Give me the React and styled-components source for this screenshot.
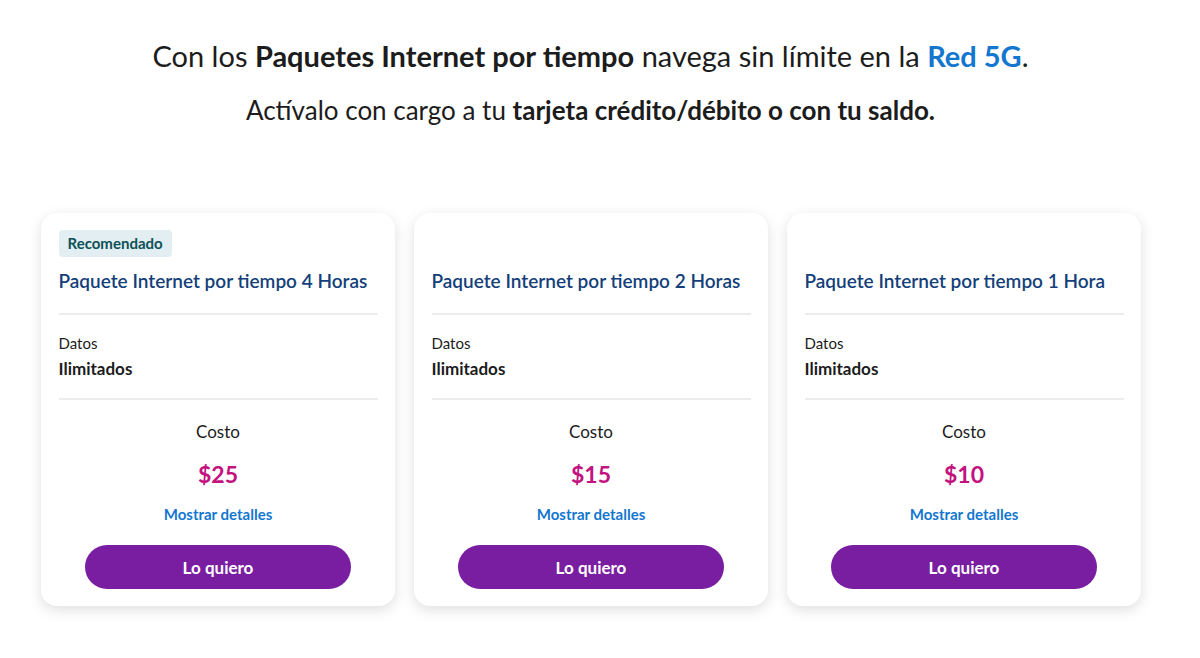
import React from "react";
import styled, { createGlobalStyle } from "styled-components";

const Global = createGlobalStyle`
  html, body { margin: 0; padding: 0; background: #fff; }
  body { font-family: Lato, "Open Sans", sans-serif; color: #1c1c1c; }
  * { box-sizing: border-box; }
`;

const Page = styled.main`
  width: 1181px;
  padding: 36px 0 40px;
  display: flex;
  flex-direction: column;
  align-items: center;
`;

const Headline = styled.p`
  margin: 0;
  font-size: ${(p) => (p.$lead ? "29px" : "26px")};
  line-height: 40px;
  color: #1c1c1c;
  text-align: center;
  & + & { margin-top: 14px; }
  b { font-weight: 700; }
`;

const Accent = styled.b`
  color: #1377cf;
`;

const Cards = styled.section`
  margin-top: 83px;
  display: grid;
  grid-template-columns: repeat(3, 354px);
  gap: 19px;
`;

const Card = styled.article`
  background: #fff;
  border-radius: 16px;
  box-shadow: 0 4px 14px rgba(0, 0, 0, 0.13);
  padding: 17px 17px 17px 18px;
  display: flex;
  flex-direction: column;
  height: 393px;
`;

const BadgeRow = styled.div`
  height: 27px;
  display: flex;
  align-items: flex-start;
`;

const Badge = styled.span`
  background: #e2eef2;
  color: #0d5158;
  font-size: 15px;
  font-weight: 700;
  padding: 0 9px;
  height: 27px;
  line-height: 27px;
  border-radius: 4px;
`;

const Title = styled.h3`
  margin: 11px 0 0;
  font-size: 19px;
  font-weight: 600;
  color: #143f7a;
  line-height: 26px;
  padding-bottom: 19px;
  border-bottom: 2px solid #ececec;
`;

const Data = styled.div`
  padding: 18px 0 19px;
  border-bottom: 2px solid #ececec;
  display: flex;
  flex-direction: column;
  gap: 6px;
`;

const Label = styled.span`
  font-size: 15px;
  line-height: 20px;
  color: #1c1c1c;
`;

const Value = styled.span`
  font-size: 17px;
  font-weight: 700;
  line-height: 20px;
  color: #1c1c1c;
`;

const Cost = styled.div`
  display: flex;
  flex-direction: column;
  align-items: center;
  padding-top: 21px;
`;

const CostLabel = styled.span`
  font-size: 17px;
  line-height: 22px;
  color: #1c1c1c;
`;

const Price = styled.span`
  margin-top: 18px;
  font-size: 23px;
  font-weight: 700;
  line-height: 26px;
  color: #c3137f;
`;

const Details = styled.a`
  margin-top: 17px;
  font-size: 15px;
  font-weight: 700;
  line-height: 20px;
  color: #1377cf;
  text-decoration: none;
  cursor: pointer;
`;

const Button = styled.button`
  margin-top: 21px;
  width: 266px;
  height: 44px;
  border: none;
  border-radius: 22px;
  background: #7a1ea1;
  color: #fff;
  font-family: inherit;
  font-size: 17px;
  font-weight: 700;
  cursor: pointer;
`;

const plans = [
  { hours: "4 Horas", price: "$25", recommended: true },
  { hours: "2 Horas", price: "$15" },
  { hours: "1 Hora", price: "$10" },
];

export default function App() {
  return (
    <Page>
      <Global />
      <Headline $lead>
        Con los <b>Paquetes Internet por tiempo</b> navega sin límite en la{" "}
        <Accent>Red 5G</Accent>.
      </Headline>
      <Headline>
        Actívalo con cargo a tu <b>tarjeta crédito/débito o con tu saldo.</b>
      </Headline>
      <Cards>
        {plans.map((p) => (
          <Card key={p.hours}>
            <BadgeRow>{p.recommended && <Badge>Recomendado</Badge>}</BadgeRow>
            <Title>Paquete Internet por tiempo {p.hours}</Title>
            <Data>
              <Label>Datos</Label>
              <Value>Ilimitados</Value>
            </Data>
            <Cost>
              <CostLabel>Costo</CostLabel>
              <Price>{p.price}</Price>
              <Details>Mostrar detalles</Details>
              <Button>Lo quiero</Button>
            </Cost>
          </Card>
        ))}
      </Cards>
    </Page>
  );
}
